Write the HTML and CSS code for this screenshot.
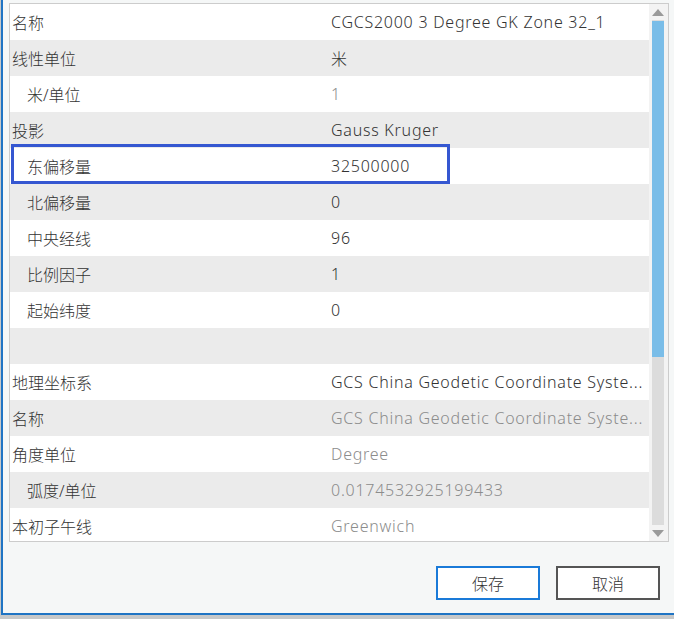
FILE: index.html
```html
<!DOCTYPE html>
<html lang="zh-CN">
<head>
<meta charset="utf-8">
<title>属性</title>
<link rel="stylesheet" href="styles.css">
</head>
<body>
<div class="screen">
  <div class="window">
    <div class="list">
      <div class="rows">
        <div class="row"><span class="label">名称</span><span class="value">CGCS2000 3 Degree GK Zone 32_1</span></div>
        <div class="row alt"><span class="label">线性单位</span><span class="value">米</span></div>
        <div class="row"><span class="label sub">米/单位</span><span class="value muted">1</span></div>
        <div class="row alt"><span class="label">投影</span><span class="value">Gauss Kruger</span></div>
        <div class="row"><span class="label sub">东偏移量</span><span class="value">32500000</span></div>
        <div class="row alt"><span class="label sub">北偏移量</span><span class="value">0</span></div>
        <div class="row"><span class="label sub">中央经线</span><span class="value">96</span></div>
        <div class="row alt"><span class="label sub">比例因子</span><span class="value">1</span></div>
        <div class="row"><span class="label sub">起始纬度</span><span class="value">0</span></div>
        <div class="row alt"><span class="label"></span><span class="value"></span></div>
        <div class="row"><span class="label">地理坐标系</span><span class="value">GCS China Geodetic Coordinate Syste...</span></div>
        <div class="row alt"><span class="label">名称</span><span class="value muted">GCS China Geodetic Coordinate Syste...</span></div>
        <div class="row"><span class="label">角度单位</span><span class="value muted">Degree</span></div>
        <div class="row alt"><span class="label sub">弧度/单位</span><span class="value muted">0.0174532925199433</span></div>
        <div class="row"><span class="label">本初子午线</span><span class="value muted">Greenwich</span></div>
      </div>
      <div class="scrollbar">
        <div class="arrow"><svg width="12" height="7" viewBox="0 0 12 7"><polygon points="6,0 12,7 0,7" fill="#9a9a9a"/></svg></div>
        <div class="track"><div class="thumb"></div></div>
        <div class="arrow"><svg width="12" height="7" viewBox="0 0 12 7"><polygon points="0,0 12,0 6,7" fill="#9a9a9a"/></svg></div>
      </div>
      <div class="highlight"></div>
    </div>
    <div class="buttons">
      <button class="btn primary">保存</button>
      <button class="btn">取消</button>
    </div>
  </div>
</div>
</body>
</html>
```

FILE: styles.css
```css
* { box-sizing: border-box; }
html, body { margin: 0; padding: 0; }
body {
  width: 674px;
  height: 619px;
  overflow: hidden;
  font-family: "Noto Sans", "Noto Sans CJK SC", sans-serif;
  font-size: 16px;
  color: #333333;
}
.screen {
  width: 674px;
  height: 619px;
  background: #c6c8c9;
  padding-left: 1px;
  padding-bottom: 4px;
}
.window {
  height: 615px;
  background: #f5f7f7;
  border-left: 2px solid #1f74c4;
  border-bottom: 2px solid #1f74c4;
  display: flex;
  flex-direction: column;
}
.list {
  position: relative;
  margin: 3px 5px 0 6px;
  height: 539px;
  border: 1px solid #cccccc;
  background: #ffffff;
  display: flex;
}
.rows {
  width: 639px;
  overflow: hidden;
}
.row {
  height: 36px;
  display: flex;
  align-items: center;
  background: #ffffff;
  white-space: nowrap;
}
.row.alt { background: #ebebeb; }
.label {
  width: 321px;
  flex: none;
  padding-left: 2px;
  font-weight: 300;
}
.label.sub { padding-left: 17px; }
.value {
  flex: 1;
  min-width: 0;
  overflow: hidden;
  padding-right: 2px;
  letter-spacing: 0.75px;
  font-weight: 300;
}
.value.muted { color: #8c8c8c; }
.scrollbar {
  width: 19px;
  background: #f3f3f3;
  padding: 0 4px 0 3px;
  display: flex;
  flex-direction: column;
}
.arrow {
  height: 16px;
  display: flex;
  align-items: center;
  justify-content: center;
  flex: none;
}
.arrow svg { display: block; }
.track {
  flex: 1;
  background: #dcdcdc;
  padding-top: 1px;
}
.thumb {
  height: 336px;
  background: #7abde8;
}
.highlight {
  position: absolute;
  left: 1px;
  top: 140px;
  width: 439px;
  height: 40px;
  border: 3px solid #3557d1;
}
.buttons {
  display: flex;
  justify-content: flex-end;
  gap: 16px;
  padding: 24px 14px 0 0;
}
.btn {
  width: 104px;
  height: 34px;
  background: #ffffff;
  border: 2px solid #555555;
  font-family: "Noto Sans CJK SC", "Noto Sans", sans-serif;
  font-weight: 300;
  font-size: 16px;
  color: #333333;
  padding: 0;
}
.btn.primary { border-color: #1a7ad8; }
```
